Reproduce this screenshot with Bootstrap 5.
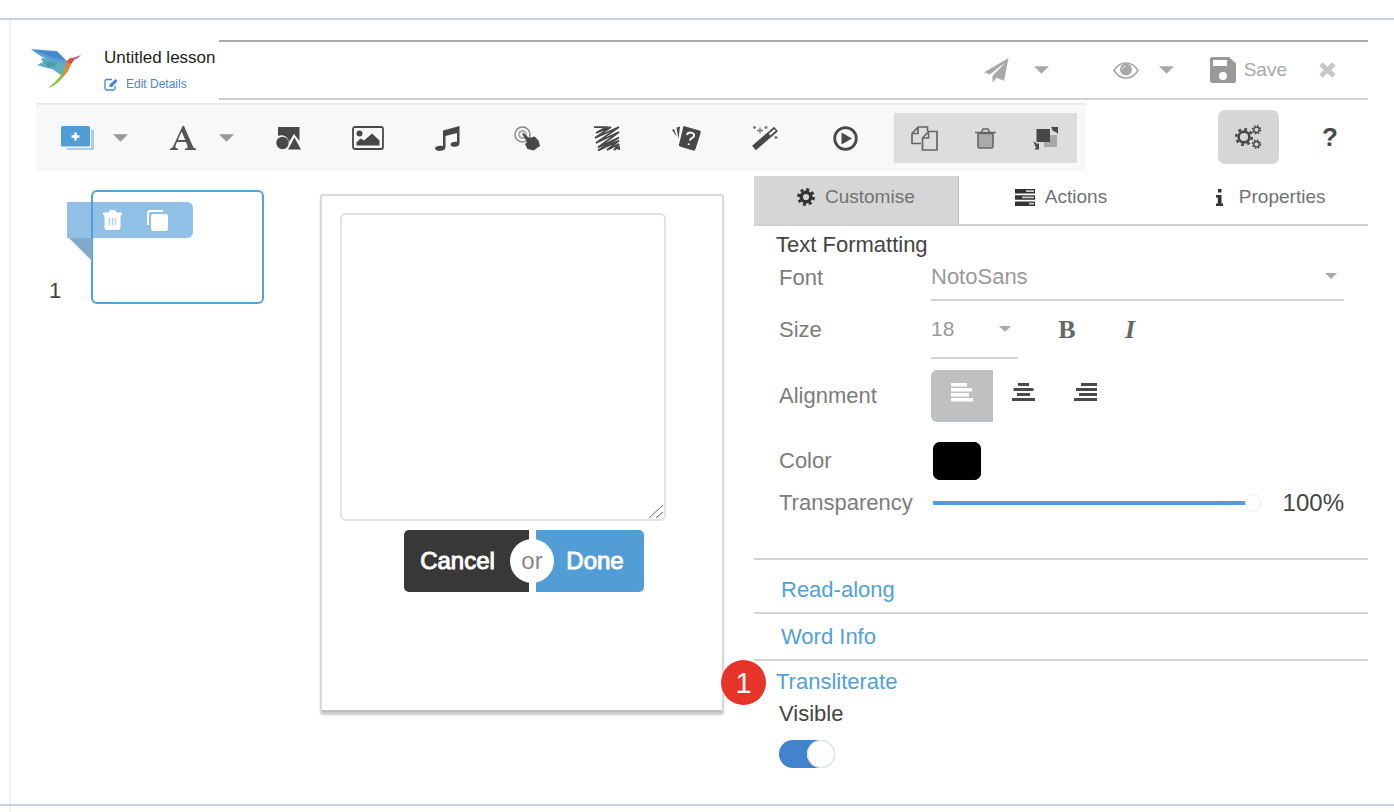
<!DOCTYPE html>
<html lang="en">
<head>
<meta charset="utf-8">
<meta name="viewport" content="width=device-width, initial-scale=1">
<title>Lesson editor</title>
<link href="https://cdn.jsdelivr.net/npm/bootstrap@5.3.0/dist/css/bootstrap.min.css" rel="stylesheet">
<style>
body{font-family:"Liberation Sans",Arial,sans-serif;color:#444;background:#fff;font-size:22px;line-height:26px}
svg{display:block}
svg:not([fill]){fill:currentColor}
.top-strip{height:20px;border-bottom:2px solid #c8d3e4}
.frame{margin-left:9px;border-left:2px solid #f1f2f6;padding:20px 26px 36px 20px}
.frame-end{margin-left:9px;height:7px;border-left:2px solid #f1f2f6}
.bottom-rule{height:2px;background:#c8d3e4}
.plain{padding:0;border:0;color:inherit;font-size:inherit;line-height:inherit;border-radius:0}
.brand-area{width:188px}
.brand-text{padding:8px 0 0 21px}
.title-text{font-size:17px;line-height:20px;color:#222}
.edit-link{font-size:12px;line-height:16px;color:#4a86cf;padding-top:8px}
.head-bar{height:60px;border-top:2px solid #aaa;border-bottom:2px solid #d0d0d0;color:#a8a8a8;font-size:19px;padding-right:32px;gap:32px}
.pair{gap:25px;margin-right:32px}
.pair.near{gap:20px;margin-right:4px}
.close-btn{color:#c8c8c8}
.indent{margin-left:5px}
.toolbar-row{margin-top:3px;gap:132px}
.tools{display:grid;grid-template-columns:112px 101px repeat(8,1fr) auto;background:#f8f8f8;border-top:2px solid #ebebeb;height:68px;color:#484848}
.split{gap:19px;padding-left:25px}
.split.text-tool{gap:22px;padding-left:22px}
.tool-group{background:#ddd;height:50px;width:183px;margin:0 9px;padding-left:17px;gap:37px}
.side-tools{width:150px;color:#484848;gap:43px;padding-top:7px}
.gear-btn{width:61px;height:54px;border-radius:7px;background:#d6d6d6}
.help{font-size:26px;font-weight:700}
.work{display:grid;grid-template-columns:284px 404px 1fr;margin-top:5px;align-items:start}
.slide-row{margin-top:14px;padding-left:13px}
.slide-no{width:42px}
.thumb{position:relative;width:173px;height:114px;border:2px solid #57a0d8;border-radius:6px;background:#fff}
.ribbon{position:absolute;left:-26px;top:10px;width:126px;height:36px;background:rgba(81,157,214,.64);border-radius:0 6px 6px 0;color:#fff;padding-left:36px;gap:25px}
.fold{position:absolute;left:-24px;top:46px;width:23px;height:23px;background:#80abca;clip-path:polygon(0 0,100% 0,100% 100%)}
.stage{margin-top:18px;height:518px;padding:17px 0 0 18px;border:2px solid #d9d9d9;border-bottom-color:#bdbdbd;border-radius:3px;box-shadow:0 3px 2px #ccc}
.stage textarea{width:326px;height:308px;border:2px solid #e2e2e2;border-radius:6px;background:#fff;resize:both}
.stage textarea::-webkit-resizer{background:url("data:image/svg+xml,%3Csvg xmlns='http://www.w3.org/2000/svg' viewBox='0 0 15 15'%3E%3Cpath d='M0 14L14 1M7 14l7-6' stroke='%23666' fill='none'/%3E%3C/svg%3E")}
.choice{margin:9px 0 0 64px;gap:7px;position:relative;width:240px}
.choice .btn{height:62px;font-size:24px;line-height:30px;color:#fff;border:0;-webkit-text-stroke:1px #fff}
.cancel-btn{width:125px;background:#383838;border-radius:5px 0 0 5px;padding:0 18px 0 0}
.done-btn{width:108px;background:#529dd6;border-radius:0 5px 5px 0;padding:0 0 0 10px}
.or-dot{position:absolute;left:106px;top:9px;width:44px;height:44px;border-radius:50%;background:#fff;color:#888;font-size:24px}
.panel{margin-left:30px}
.tab-bar{display:grid;grid-template-columns:repeat(3,1fr);height:50px;border-bottom:2px solid #d0d0d0;font-size:19px}
.tab-bar .btn{gap:10px;color:#727272;padding-bottom:6px}
.tab-bar .wide-gap{gap:16px;padding-left:10px}
.tab-bar svg{color:#333}
.tab-bar .tab-on{background:#d6d6d6;border-right:1px solid #bbb}
.group-title{padding:6px 22px 0;height:32px}
.field{display:grid;grid-template-columns:152px 1fr;align-items:center;padding:0 24px 0 25px;color:#7c7c7c}
.f-font{height:43px}.f-size{height:58px}.f-align{height:74px}.f-color{height:56px}.f-range{height:28px}
.line-select{height:100%;border:0;border-bottom:2px solid #d4d4d4;border-radius:0;color:#9a9a9a;font-size:22px;line-height:26px;padding:0;background-color:transparent;background-image:url("data:image/svg+xml,%3Csvg xmlns='http://www.w3.org/2000/svg' viewBox='0 0 12 6'%3E%3Cpath d='M0 0h12L6 6z' fill='%23aaa'/%3E%3C/svg%3E");background-size:12px 6px;background-position:right 7px center}
.f-font .line-select{padding-bottom:3px;background-position:right 7px top 15px}
.f-font label{padding-bottom:4px}
.size-select{width:87px;font-size:21px}
.serif-btn{font-family:"Liberation Serif",serif;font-size:26px;color:#666;width:18px;margin-left:40px}
.serif-btn.fst-italic{margin-left:45px}
.square{width:62px;height:52px;color:#4a4a4a}
.square.picked{background:#bfc0c2;border-radius:6px 0 0 6px;color:#fff}
.swatch{width:48px;height:38px;margin-left:2px;padding:0;border:0;border-radius:7px;background:#000;appearance:none}
.swatch::-webkit-color-swatch-wrapper{padding:0}
.swatch::-webkit-color-swatch{border:0;border-radius:7px}
.slide-range{flex:1;min-width:0;margin:0 22px 0 2px;height:18px;appearance:none;background:transparent}
.slide-range::-webkit-slider-runnable-track{height:4px;background:#5599e6}
.slide-range::-webkit-slider-thumb{appearance:none;width:16px;height:18px;margin-top:-7px;border-radius:50%;background:#fff;border:1px solid #eee}
.percent{font-size:24px;color:#444}
.fold-list{margin-top:41px;border-top:2px solid #d4d4d4}
.fold-list a{color:#539fd6;text-decoration:none}
.fold-item{height:47px;border-bottom:2px solid #d4d4d4;padding-left:27px}
.fold-item.tall{height:54px;padding-top:7px}
.last-part{position:relative;padding:8px 0 0 22px}
.marker{position:absolute;left:-33px;top:-1px;width:45px;height:45px;border-radius:50%;background:#e73429;color:#fff;font-size:29px}
.vis{padding:6px 0 0 3px}
.toggle{width:56px;height:28px;margin:13px 0 0;appearance:none;display:block;border-radius:14px;background:#4284cb url("data:image/svg+xml,%3Csvg xmlns='http://www.w3.org/2000/svg' viewBox='0 0 28 28'%3E%3Ccircle cx='14' cy='14' r='14' fill='%23fff'/%3E%3Ccircle cx='14' cy='14' r='13.500' fill='none' stroke='%23ddd'/%3E%3C/svg%3E") right center/28px 28px no-repeat}
</style>
<script src="https://cdn.jsdelivr.net/npm/bootstrap@5.3.0/dist/js/bootstrap.bundle.min.js"></script>
</head>
<body>
<svg width="0" height="0" class="position-absolute" aria-hidden="true">
  <symbol id="caret" viewBox="0 0 16 8"><path d="M0 0h16L8 8z"/></symbol>
</svg>
<div class="top-strip"></div>
<div class="frame">
  <header class="d-flex">
    <div class="brand-area d-flex flex-shrink-0">
      <svg class="mt-2" width="52" height="42" viewBox="0 0 52 42">
        <path fill="#5fb0bf" d="M11 10l25 3-1 8-5 6-9-6c-5-1-9-2-15-4l6-3-2-3z"/>
        <path fill="#3f8f9c" d="M13 13l14 2-4 4-6 1z" opacity=".6"/>
        <path fill="#5b9fd8" d="M0 1l26 2 10 10-2 3-12-3C14 11 7 7 0 1z"/>
        <path fill="#3f7fc8" d="M2 2l24 2 8 8-11-2z" opacity=".7"/>
        <path fill="#8fc045" d="M34 18c-2 8-8 15-17 22 9-3 15-9 18-17z"/>
        <path fill="#e8833a" d="M36 13l5 1c-2 6-5 12-11 17 4-6 4-12 6-18z"/>
        <path fill="#d8543f" d="M35 14l4-4h6l-5 6z"/>
        <path fill="#c06a9c" d="M41 10l9-3-4 4z"/>
      </svg>
      <div class="brand-text d-flex flex-column">
        <span class="title-text text-nowrap">Untitled lesson</span>
        <a href="#" class="edit-link d-flex align-items-center gap-2 text-decoration-none">
          <svg width="14" height="13" viewBox="0 0 14 13" fill="none" stroke="currentColor" stroke-width="1.3"><path d="M8 1.500H2.500a1.500 1.500 0 0 0-1.500 1.500v7.500A1.500 1.500 0 0 0 2.500 12h7a1.500 1.500 0 0 0 1.500-1.500V8"/><path d="M5.500 6.500v2.500H8L13.500 3l-2-2z" fill="currentColor" stroke="none"/></svg>
          Edit Details</a>
      </div>
    </div>
    <div class="head-bar flex-grow-1 d-flex align-items-center justify-content-end">
      <div class="pair d-flex align-items-center">
        <button class="btn plain" aria-label="Publish"><svg width="25" height="25" viewBox="0 0 25 25"><path d="M24.500 0L0 14.200l5.800 2.400L21.500 4.200 8.500 18v6.500l4-4.800 7.500 3z"/></svg></button>
        <button class="btn plain" aria-label="Publish options"><svg width="15" height="8"><use href="#caret"/></svg></button>
      </div>
      <div class="pair near d-flex align-items-center">
        <button class="btn plain" aria-label="Preview"><svg width="26" height="17" viewBox="0 0 26 17"><path fill="none" stroke="currentColor" stroke-width="1.600" d="M1 8.500C4 3.500 8.500 1 13 1s9 2.500 12 7.500C22 13.500 17.500 16 13 16S4 13.500 1 8.500z"/><circle cx="13" cy="7.500" r="6"/><path d="M9.500 7.500A3.500 3.500 0 0 1 13 4" stroke="#ddd" fill="none"/></svg></button>
        <button class="btn plain" aria-label="Preview options"><svg width="15" height="8"><use href="#caret"/></svg></button>
      </div>
      <button class="btn plain d-flex align-items-center"><svg class="me-2" width="26" height="26" viewBox="0 0 26 26"><path fill="#999" fill-rule="evenodd" d="M1.500 0H19l7 6.500v18l-1.500 1.500h-23L0 24.500v-23zM3 3v6h14V3zM13 15a4 4 0 1 0 0 8 4 4 0 0 0 0-8z"/></svg>Save</button>
      <button class="btn plain close-btn" aria-label="Close"><svg width="17" height="16" viewBox="0 0 17 16"><path d="M2 2l13 12M15 2L2 14" stroke="currentColor" stroke-width="5"/></svg></button>
    </div>
  </header>

  <div class="toolbar-row indent d-flex align-items-start">
    <div class="tools flex-grow-1 align-items-center">
      <div class="split d-flex align-items-center">
        <button class="btn plain" aria-label="Add slide"><svg width="33" height="24" viewBox="0 0 33 24"><path fill="#a5cdec" d="M30 4h3v20H6v-2h24z"/><rect width="29" height="20.500" rx="1.500" fill="#529dd6"/><path d="M14.500 6.500v8M10.500 10.500h8" stroke="#fff" stroke-width="2.500"/></svg></button>
        <button class="btn plain" aria-label="Slide options"><svg width="15" height="8" color="#999"><use href="#caret"/></svg></button>
      </div>
      <div class="split text-tool d-flex align-items-center">
        <button class="btn plain" aria-label="Add text"><svg width="27" height="24" viewBox="0 0 27 24" fill="#555"><path fill-rule="evenodd" d="M0 24v-1.500c2-.3 2.800-1 3.800-3.500L12.500 0h1.500l8.500 19.500c1 2.200 1.500 2.800 3.500 3v1.500H15v-1.500c2.800-.2 3.200-.8 2.300-3l-1.300-3.500H7l-1.200 3c-.8 2.300-.6 3.300 2.200 3.500V24zM8 14h7.300L11.600 5.500z"/></svg></button>
        <button class="btn plain" aria-label="Text options"><svg width="15" height="8" color="#999"><use href="#caret"/></svg></button>
      </div>
      <button class="btn plain d-flex justify-content-center" aria-label="Shapes"><svg width="25" height="23" viewBox="0 0 25 23"><path d="M2 0h21.500v14L18 7l-5 8c-1-5-6-8-11-6z"/><circle cx="6.500" cy="16" r="6.200"/><path d="M18.500 10.500L25 22.500H12z"/></svg></button>
      <button class="btn plain d-flex justify-content-center" aria-label="Image"><svg width="32" height="24" viewBox="0 0 32 24"><rect x="1" y="1" width="30" height="22" rx="2" fill="none" stroke="currentColor" stroke-width="1.800"/><circle cx="7.500" cy="7.500" r="3"/><path d="M4.500 19.500v-3l4-4 3.500 2 8-7 7.500 7v5z"/></svg></button>
      <button class="btn plain d-flex justify-content-center" aria-label="Audio"><svg width="25" height="25" viewBox="0 0 25 25"><path d="M8 4.500L24.500 0v17.500c0 4-9 4.500-9 1 0-2 3-3.300 6.500-2.700V7L10.500 10v11.500c0 4.200-10.500 4.500-10.500 1 0-2 4-3.500 8-2.500z"/></svg></button>
      <button class="btn plain d-flex justify-content-center" aria-label="Hotspot"><svg width="27" height="25" viewBox="0 0 27 25"><circle cx="8.500" cy="8.500" r="7.500" fill="none" stroke="#888" stroke-width="1.500"/><circle cx="8.500" cy="8.500" r="3.500" fill="none" stroke="#aaa" stroke-width="2"/><path d="M8 7.500l1.500-.5 5.500 5 5.500-1.500 4 4 1.500 5.500-6.500 4.500-6-1.500-2.500-5 2-2z"/></svg></button>
      <button class="btn plain d-flex justify-content-center" aria-label="Scribble"><svg width="26" height="25" viewBox="0 0 26 25" fill="none" stroke="currentColor" stroke-width="1.800"><path d="M0 1.200h12L2 7 17 1 1 12 25 1 2 17 25 6 4 21.500 25 11.500 4 24.500 25 14.500 13 24l12-6-5 6 5-3v3"/></svg></button>
      <button class="btn plain d-flex justify-content-center" aria-label="Flash cards"><svg width="29" height="25" viewBox="0 0 29 25"><path d="M0 4l2-1 3 8zM4.500 1.500L8 .5 6.500 13z"/><path d="M11.500 0L27.500 4.500c1.200.4 1.600 1 1.200 2.200L23.500 23c-.4 1.200-1.200 1.800-2.500 1.400L8 20.500c-1-.4-1.400-1-1-2z"/><path d="M15 9c1-4 8-2.500 7 1-.6 2-3.500 2-4.200 4.500M17 17.500l-.5 1.500" fill="none" stroke="#f5f5f5" stroke-width="2"/></svg></button>
      <button class="btn plain d-flex justify-content-center" aria-label="Effects"><svg width="27" height="25" viewBox="0 0 27 25"><path d="M2 22L24 3" stroke="currentColor" stroke-width="5.800"/><path d="M17.500 8.600L23 3.900" stroke="#f8f8f8" stroke-width="2.200"/><path d="M8 1.500v6M5 4.500h6M2.500 0v3M1 1.500h3M14 0v3M12.500 1.500h3M24 10v3M22.500 11.500h3" stroke="#777" stroke-width="1.300"/></svg></button>
      <button class="btn plain d-flex justify-content-center" aria-label="Play"><svg width="25" height="25" viewBox="0 0 25 25"><circle cx="12.500" cy="12.500" r="10.800" fill="none" stroke="currentColor" stroke-width="2.800"/><path d="M8.500 6.500l10.500 6-10.500 6z"/></svg></button>
      <div class="tool-group d-flex align-items-center">
        <button class="btn plain" aria-label="Copy"><svg width="27" height="25" viewBox="0 0 27 25" fill="none" stroke="#666" stroke-width="1.700"><path d="M10 17.500H1V7.500L7 1h9.500v4M7 1v6.500H1M11.500 24V12l6-6.500h8.500V24zM17.500 5.500V12h-6"/></svg></button>
        <button class="btn plain" aria-label="Delete"><svg width="21" height="21" viewBox="0 0 21 21"><path d="M3 5.500h15V18.500a1.500 1.500 0 0 1-1.500 1.500h-12A1.500 1.500 0 0 1 3 18.500z" fill="#aaa" stroke="#666" stroke-width="1.600"/><path d="M0 4.500h21M6.500 4l1.500-3h5l1.500 3" fill="none" stroke="#666" stroke-width="1.600"/></svg></button>
        <button class="btn plain" aria-label="Arrange"><svg width="26" height="25" viewBox="0 0 26 25"><rect x="11" y="9" width="13" height="12" fill="#a9a9a9"/><rect x="3.500" y="3" width="13.500" height="13"/><path d="M18 1l7 0v7l-2-2-3-1zM0 15l2 1.500 3 1.500 1-1v6.500H1.500l1.500-2z"/></svg></button>
      </div>
    </div>
    <div class="side-tools d-flex align-items-center flex-shrink-0">
      <button class="btn plain gear-btn d-flex align-items-center justify-content-center" aria-label="Settings"><svg width="27" height="24" viewBox="0 0 27 24" fill="none" stroke="currentColor"><circle cx="9" cy="12" r="5.400" stroke-width="2.600"/><circle cx="9" cy="12" r="7.800" stroke-width="2.600" stroke-dasharray="2.800 3.330"/><circle cx="21.500" cy="4.800" r="2.700" stroke-width="1.400"/><circle cx="21.500" cy="4.800" r="4" stroke-width="1.500" stroke-dasharray="1.600 1.540"/><circle cx="21.500" cy="19.200" r="2.700" stroke-width="1.400"/><circle cx="21.500" cy="19.200" r="4" stroke-width="1.500" stroke-dasharray="1.600 1.540"/></svg></button>
      <button class="btn plain help" aria-label="Help">?</button>
    </div>
  </div>

  <main class="work indent">
    <div class="slide-row d-flex align-items-end">
      <span class="slide-no">1</span>
      <div class="thumb">
        <div class="fold"></div>
        <div class="ribbon d-flex align-items-center">
          <button class="btn plain" aria-label="Delete slide"><svg width="19" height="20" viewBox="0 0 19 20"><path d="M0 2.500h5.500L7 0h5l1.500 2.500H19V5h-1.500v13l-1.500 2H3l-1.500-2V5H0z"/><path d="M6.500 8v7M9.500 8v7M12.500 8v7" stroke="#a9cfeb" stroke-width="1.300"/></svg></button>
          <button class="btn plain" aria-label="Duplicate slide"><svg width="21" height="21" viewBox="0 0 21 21"><path d="M1 15V2.500L2.500 1H16" fill="none" stroke="currentColor" stroke-width="2"/><rect x="4" y="4" width="17" height="17" rx="2.500"/></svg></button>
        </div>
      </div>
    </div>

    <div class="stage">
      <textarea class="d-block" aria-label="Text content"></textarea>
      <div class="choice d-flex">
        <button class="btn cancel-btn">Cancel</button>
        <button class="btn done-btn">Done</button>
        <span class="or-dot d-flex align-items-center justify-content-center">or</span>
      </div>
    </div>

    <aside class="panel">
      <div class="tab-bar">
        <button class="btn plain tab-on d-flex align-items-center justify-content-center"><svg width="18" height="18" viewBox="0 0 18 18" fill="none" stroke="currentColor"><circle cx="9" cy="9" r="4.800" stroke-width="3.400"/><circle cx="9" cy="9" r="7.500" stroke-width="2.800" stroke-dasharray="3 2.890"/></svg>Customise</button>
        <button class="btn plain d-flex align-items-center justify-content-center"><svg width="20" height="17" viewBox="0 0 20 17"><path d="M0 0h20v4.500H0zM0 6.200h20v4.500H0zM0 12.400h20V17H0z"/><path d="M11 2.200h8M7 8.400h12M14 14.700h5" stroke="#ccc" stroke-width="1.800"/></svg>Actions</button>
        <button class="btn plain wide-gap d-flex align-items-center justify-content-center"><svg width="7" height="17" viewBox="0 0 7 17"><path d="M2 0h3.500v3.500H2zM0 6h5.500v8.500H7V17H0v-2.500h1.800v-6H0z"/></svg>Properties</button>
      </div>
      <div class="group-title">Text Formatting</div>
      <div class="field f-font">
        <label for="font">Font</label>
        <select id="font" class="form-select line-select"><option>NotoSans</option></select>
      </div>
      <div class="field f-size">
        <label for="size">Size</label>
        <div class="d-flex align-items-center h-100">
          <select id="size" class="form-select line-select size-select"><option>18</option></select>
          <button class="btn plain serif-btn fw-bold" aria-label="Bold">B</button>
          <button class="btn plain serif-btn fw-bold fst-italic" aria-label="Italic">I</button>
        </div>
      </div>
      <div class="field f-align">
        <span>Alignment</span>
        <div class="d-flex">
          <button class="btn plain square picked d-flex align-items-center justify-content-center" aria-label="Align left"><svg width="24" height="26" viewBox="0 0 24 26"><path d="M1 0h16v3.500H1zM1 5h21v3.500H1zM1 10h18v3.500H1zM1 15h22v3.500H1z"/></svg></button>
          <button class="btn plain square d-flex align-items-center justify-content-center" aria-label="Align centre"><svg width="24" height="26" viewBox="0 0 24 26"><path d="M6 0h11v3H6zM1.500 5h20v3h-20zM5 10h13v3H5zM0 15h23v3H0z"/></svg></button>
          <button class="btn plain square d-flex align-items-center justify-content-center" aria-label="Align right"><svg width="24" height="26" viewBox="0 0 24 26"><path d="M7 0h16v3H7zM2 5h21v3H2zM5 10h18v3H5zM0 15h23v3H0z"/></svg></button>
        </div>
      </div>
      <div class="field f-color">
        <label for="color">Color</label>
        <input id="color" class="swatch" type="color" value="#000000">
      </div>
      <div class="field f-range">
        <label for="alpha">Transparency</label>
        <div class="d-flex align-items-center">
          <input id="alpha" class="slide-range" type="range" min="0" max="100" value="100">
          <output class="percent" for="alpha">100%</output>
        </div>
      </div>
      <div class="fold-list">
        <div class="fold-item tall d-flex align-items-center"><a href="#">Read-along</a></div>
        <div class="fold-item d-flex align-items-center"><a href="#">Word Info</a></div>
        <div class="last-part">
          <span class="marker d-flex align-items-center justify-content-center">1</span>
          <a href="#" class="d-block">Transliterate</a>
          <div class="vis">
            <label for="visible" class="d-block">Visible</label>
            <input id="visible" class="toggle" type="checkbox" role="switch" checked>
          </div>
        </div>
      </div>
    </aside>
  </main>
</div>
<div class="bottom-rule"></div>
<div class="frame-end"></div>
</body>
</html>
